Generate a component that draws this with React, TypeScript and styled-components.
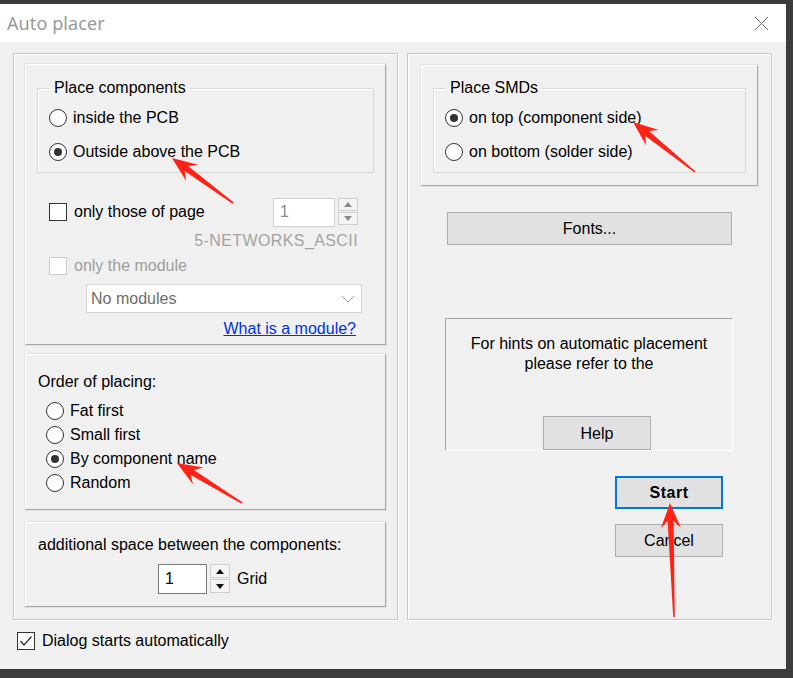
import React from 'react';
import styled, { createGlobalStyle, css } from 'styled-components';

const GlobalStyle = createGlobalStyle`
  html, body {
    margin: 0;
    padding: 0;
    background: #3c3c3c;
    overflow: hidden;
  }
  body {
    font-family: "Liberation Sans", Arial, sans-serif;
    font-size: 16px;
    color: #000;
  }
  * { box-sizing: border-box; }
`;

const Screen = styled.div`
  position: relative;
  width: 793px;
  height: 678px;
  padding-top: 4px;
`;

const Dialog = styled.div`
  width: 786px;
  height: 665px;
  background: #f0f0f0;
  display: flex;
  flex-direction: column;
`;

const TitleBar = styled.div`
  height: 38px;
  flex: none;
  background: #fff;
  display: flex;
  align-items: center;
  justify-content: space-between;
  padding: 0 17px 0 7px;
`;

const Title = styled.span`
  font-family: "Noto Sans", "Open Sans", sans-serif;
  font-size: 18px;
  color: #9a9a9a;
  letter-spacing: 0.1px;
`;

const Body = styled.div`
  flex: 1;
  padding: 11px 14px 0 13px;
  display: flex;
  flex-direction: column;
`;

const Columns = styled.div`
  display: flex;
  gap: 9px;
`;

const Group = styled.div<{ $width: number }>`
  width: ${p => p.$width}px;
  height: 567px;
  border: 1px solid #c6c6c6;
  box-shadow: inset 1px 1px 0 #fff, 1px 1px 0 #fff;
  display: flex;
  flex-direction: column;
`;

const LeftGroup = styled(Group)`
  padding: 10px 11px 0 11px;
`;

const RightGroup = styled(Group)`
  padding: 11px 13px 0 13px;
  align-items: flex-start;
`;

const Panel = styled.div<{ $height: number; $mt?: number }>`
  height: ${p => p.$height}px;
  margin-top: ${p => p.$mt ?? 0}px;
  border: 1px solid;
  border-color: #fff #a6a6a6 #a6a6a6 #fff;
  box-shadow: 0 0 0 1px #e2e2e2;
  display: flex;
  flex-direction: column;
  flex: none;
  align-self: stretch;
`;

const GroupBoxWrap = styled.div<{ $pt: number }>`
  padding: ${p => p.$pt}px 11px 0 11px;
`;

const GroupBox = styled.fieldset`
  margin: 0;
  padding: 4px 0 3px 0;
  border: 1px solid #d9d9d9;
  box-shadow: inset 1px 1px 0 #fff;
  min-width: 0;
`;

const Legend = styled.legend`
  margin-left: 12px;
  padding: 0 4px;
  font-size: 16px;
  line-height: 18px;
`;

const OptionRow = styled.label<{ $height: number; $pl: number; $disabled?: boolean; $gap?: number }>`
  display: flex;
  align-items: center;
  gap: ${p => p.$gap ?? 6}px;
  height: ${p => p.$height}px;
  padding-left: ${p => p.$pl}px;
  line-height: 18px;
  color: ${p => (p.$disabled ? '#9d9d9d' : '#000')};
  white-space: nowrap;
`;

const RadioCircle = styled.span<{ $checked?: boolean }>`
  width: 18px;
  height: 18px;
  flex: none;
  border-radius: 50%;
  border: 1px solid #333;
  background: #fff;
  display: flex;
  align-items: center;
  justify-content: center;
  ${p =>
    p.$checked &&
    css`
      &::after {
        content: '';
        width: 8px;
        height: 8px;
        border-radius: 50%;
        background: #333;
      }
    `}
`;

const CheckBoxSquare = styled.span<{ $disabled?: boolean }>`
  width: 18px;
  height: 18px;
  flex: none;
  border: 1px solid ${p => (p.$disabled ? '#cccccc' : '#333')};
  background: #fff;
  display: flex;
  align-items: center;
  justify-content: center;
`;

const FieldRow = styled.div<{ $mt: number }>`
  display: flex;
  align-items: center;
  justify-content: space-between;
  margin-top: ${p => p.$mt}px;
  padding: 0 27px 0 23px;
  height: 30px;
`;

const SpinWrap = styled.div`
  display: flex;
  align-items: flex-start;
  gap: 3px;
`;

const SpinInput = styled.div<{ $width: number; $disabled?: boolean }>`
  width: ${p => p.$width}px;
  height: ${p => (p.$disabled ? 29 : 30)}px;
  background: #fff;
  border: 1px solid ${p => (p.$disabled ? '#cfcfcf' : '#7a7a7a')};
  color: ${p => (p.$disabled ? '#8a8a8a' : '#000')};
  padding-left: 6px;
  display: flex;
  align-items: center;
`;

const SpinButtons = styled.div`
  display: flex;
  flex-direction: column;
  gap: 1px;
`;

const SpinButton = styled.div<{ $height: number }>`
  width: 20px;
  height: ${p => p.$height}px;
  border: 1px solid #cfcfcf;
  background: #f4f4f4;
  display: flex;
  align-items: center;
  justify-content: center;
`;

const NoteText = styled.div<{ $mt: number; $pr: number }>`
  margin-top: ${p => p.$mt}px;
  padding-right: ${p => p.$pr}px;
  text-align: right;
  line-height: 18px;
  color: #a3a3a3;
  letter-spacing: 0.4px;
`;

const Select = styled.div`
  margin: 9px 0 0 60px;
  width: 276px;
  height: 29px;
  background: #fff;
  border: 1px solid #d4d4d4;
  color: #6d6d6d;
  display: flex;
  align-items: center;
  justify-content: space-between;
  padding: 0 6px 0 4px;
`;

const HelpLink = styled.a`
  align-self: flex-end;
  margin: 7px 29px 0 0;
  line-height: 18px;
  color: #0033dd;
  text-decoration: underline;
  cursor: pointer;
`;

const Caption = styled.div<{ $mt: number }>`
  margin-top: ${p => p.$mt}px;
  padding-left: 12px;
  line-height: 18px;
`;

const RadioList = styled.div`
  margin-top: 8px;
  display: flex;
  flex-direction: column;
`;

const GridRow = styled.div`
  margin-top: 10px;
  padding-left: 132px;
  display: flex;
  align-items: center;
  gap: 7px;
`;

const BottomCheck = styled(OptionRow)`
  margin: 12px 0 0 4px;
`;

const Button = styled.button<{ $width: number; $height: number; $mt: number; $ml: number; $default?: boolean }>`
  width: ${p => p.$width}px;
  height: ${p => p.$height}px;
  margin: ${p => p.$mt}px 0 0 ${p => p.$ml}px;
  flex: none;
  font-family: "Liberation Sans", Arial, sans-serif;
  font-size: 16px;
  color: #000;
  background: #e1e1e1;
  border: 1px solid #adadad;
  padding: 1px 0 0 0;
  ${p =>
    p.$default &&
    css`
      border: 2px solid #0078d7;
      font-weight: bold;
      letter-spacing: 0.5px;
    `}
`;

const HintBox = styled.div`
  width: 288px;
  height: 133px;
  margin: 73px 0 0 24px;
  flex: none;
  border: 1px solid;
  border-color: #a0a0a0 #fff #fff #a0a0a0;
  padding-top: 15px;
  display: flex;
  flex-direction: column;
`;

const HintText = styled.div`
  text-align: center;
  line-height: 20px;
`;

const Overlay = styled.svg`
  position: absolute;
  left: 0;
  top: 0;
  pointer-events: none;
`;

const Radio = ({ label, checked, pl, height }: { label: string; checked?: boolean; pl: number; height: number }) => (
  <OptionRow $height={height} $pl={pl}>
    <RadioCircle $checked={checked} />
    {label}
  </OptionRow>
);

const Arrow = ({ from, to }: { from: [number, number]; to: [number, number] }) => {
  const [tx, ty] = from;
  const [hx, hy] = to;
  const len = Math.hypot(hx - tx, hy - ty);
  const ux = (hx - tx) / len;
  const uy = (hy - ty) / len;
  const nx = -uy;
  const ny = ux;
  const L = 25;
  const W = 10;
  const jx = hx - ux * (L - 7);
  const jy = hy - uy * (L - 7);
  const bx = hx - ux * L;
  const by = hy - uy * L;
  const pts = [
    [tx + nx * 0.8, ty + ny * 0.8],
    [jx + nx * 3, jy + ny * 3],
    [bx + nx * W, by + ny * W],
    [hx, hy],
    [bx - nx * W, by - ny * W],
    [jx - nx * 3, jy - ny * 3],
    [tx - nx * 0.8, ty - ny * 0.8],
  ];
  return <polygon points={pts.map(p => p.join(',')).join(' ')} fill="#ff2317" />;
};

const Up = ({ color }: { color: string }) => (
  <svg width="8" height="5" viewBox="0 0 8 5">
    <polygon points="0,5 8,5 4,0" fill={color} />
  </svg>
);

const Down = ({ color }: { color: string }) => (
  <svg width="8" height="5" viewBox="0 0 8 5">
    <polygon points="0,0 8,0 4,5" fill={color} />
  </svg>
);

const Spinner = ({ width, disabled, btnH }: { width: number; disabled?: boolean; btnH: number }) => {
  const c = disabled ? '#8a8a8a' : '#111';
  return (
    <SpinWrap>
      <SpinInput $width={width} $disabled={disabled}>1</SpinInput>
      <SpinButtons>
        <SpinButton $height={btnH}><Up color={c} /></SpinButton>
        <SpinButton $height={btnH}><Down color={c} /></SpinButton>
      </SpinButtons>
    </SpinWrap>
  );
};

export default function App() {
  return (
    <Screen>
      <GlobalStyle />
      <Dialog>
        <TitleBar>
          <Title>Auto placer</Title>
          <svg width="15" height="15" viewBox="0 0 15 15">
            <path d="M1 1 L14 14 M14 1 L1 14" stroke="#6e6e6e" strokeWidth="1" />
          </svg>
        </TitleBar>
        <Body>
          <Columns>
            <LeftGroup $width={385}>
              <Panel $height={281}>
                <GroupBoxWrap $pt={14}>
                  <GroupBox>
                    <Legend>Place components</Legend>
                    <Radio label="inside the PCB" pl={11} height={34} />
                    <Radio label="Outside above the PCB" pl={11} height={34} checked />
                  </GroupBox>
                </GroupBoxWrap>
                <FieldRow $mt={24}>
                  <OptionRow $height={30} $pl={0} $gap={7}>
                    <CheckBoxSquare />
                    only those of page
                  </OptionRow>
                  <Spinner width={62} btnH={13} disabled />
                </FieldRow>
                <NoteText $mt={5} $pr={27}>5-NETWORKS_ASCII</NoteText>
                <OptionRow $height={18} $pl={23} $gap={7} $disabled style={{ marginTop: 7 }}>
                  <CheckBoxSquare $disabled />
                  only the module
                </OptionRow>
                <Select>
                  No modules
                  <svg width="14" height="8" viewBox="0 0 14 8">
                    <path d="M1 1 L7 7 L13 1" fill="none" stroke="#a0a0a0" strokeWidth="1" />
                  </svg>
                </Select>
                <HelpLink>What is a module?</HelpLink>
              </Panel>
              <Panel $height={156} $mt={9}>
                <Caption $mt={18}>Order of placing:</Caption>
                <RadioList>
                  <Radio label="Fat first" pl={20} height={24} />
                  <Radio label="Small first" pl={20} height={24} />
                  <Radio label="By component name" pl={20} height={24} checked />
                  <Radio label="Random" pl={20} height={24} />
                </RadioList>
              </Panel>
              <Panel $height={85} $mt={12}>
                <Caption $mt={13}>additional space between the components:</Caption>
                <GridRow>
                  <Spinner width={49} btnH={14} />
                  Grid
                </GridRow>
              </Panel>
            </LeftGroup>
            <RightGroup $width={365}>
              <Panel $height={121}>
                <GroupBoxWrap $pt={13}>
                  <GroupBox>
                    <Legend>Place SMDs</Legend>
                    <Radio label="on top (component side)" pl={11} height={34} checked />
                    <Radio label="on bottom (solder side)" pl={11} height={34} />
                  </GroupBox>
                </GroupBoxWrap>
              </Panel>
              <Button $width={285} $height={33} $mt={26} $ml={26}>Fonts...</Button>
              <HintBox>
                <HintText>For hints on automatic placement<br />please refer to the</HintText>
                <Button $width={108} $height={34} $mt={42} $ml={97}>Help</Button>
              </HintBox>
              <Button $width={108} $height={33} $mt={25} $ml={194} $default>Start</Button>
              <Button $width={108} $height={33} $mt={15} $ml={194}>Cancel</Button>
            </RightGroup>
          </Columns>
          <BottomCheck $height={18} $pl={0} $gap={7}>
            <CheckBoxSquare>
              <svg width="14" height="12" viewBox="0 0 14 12">
                <path d="M1.5 6 L5 10 L12.5 1.5" fill="none" stroke="#333" strokeWidth="1.3" />
              </svg>
            </CheckBoxSquare>
            Dialog starts automatically
          </BottomCheck>
        </Body>
      </Dialog>
      <Overlay width="793" height="678" viewBox="0 0 793 678">
        <Arrow from={[233, 203]} to={[172, 158]} />
        <Arrow from={[695, 172]} to={[633, 122]} />
        <Arrow from={[242, 503]} to={[177, 463]} />
        <Arrow from={[674, 617]} to={[670, 503]} />
      </Overlay>
    </Screen>
  );
}
